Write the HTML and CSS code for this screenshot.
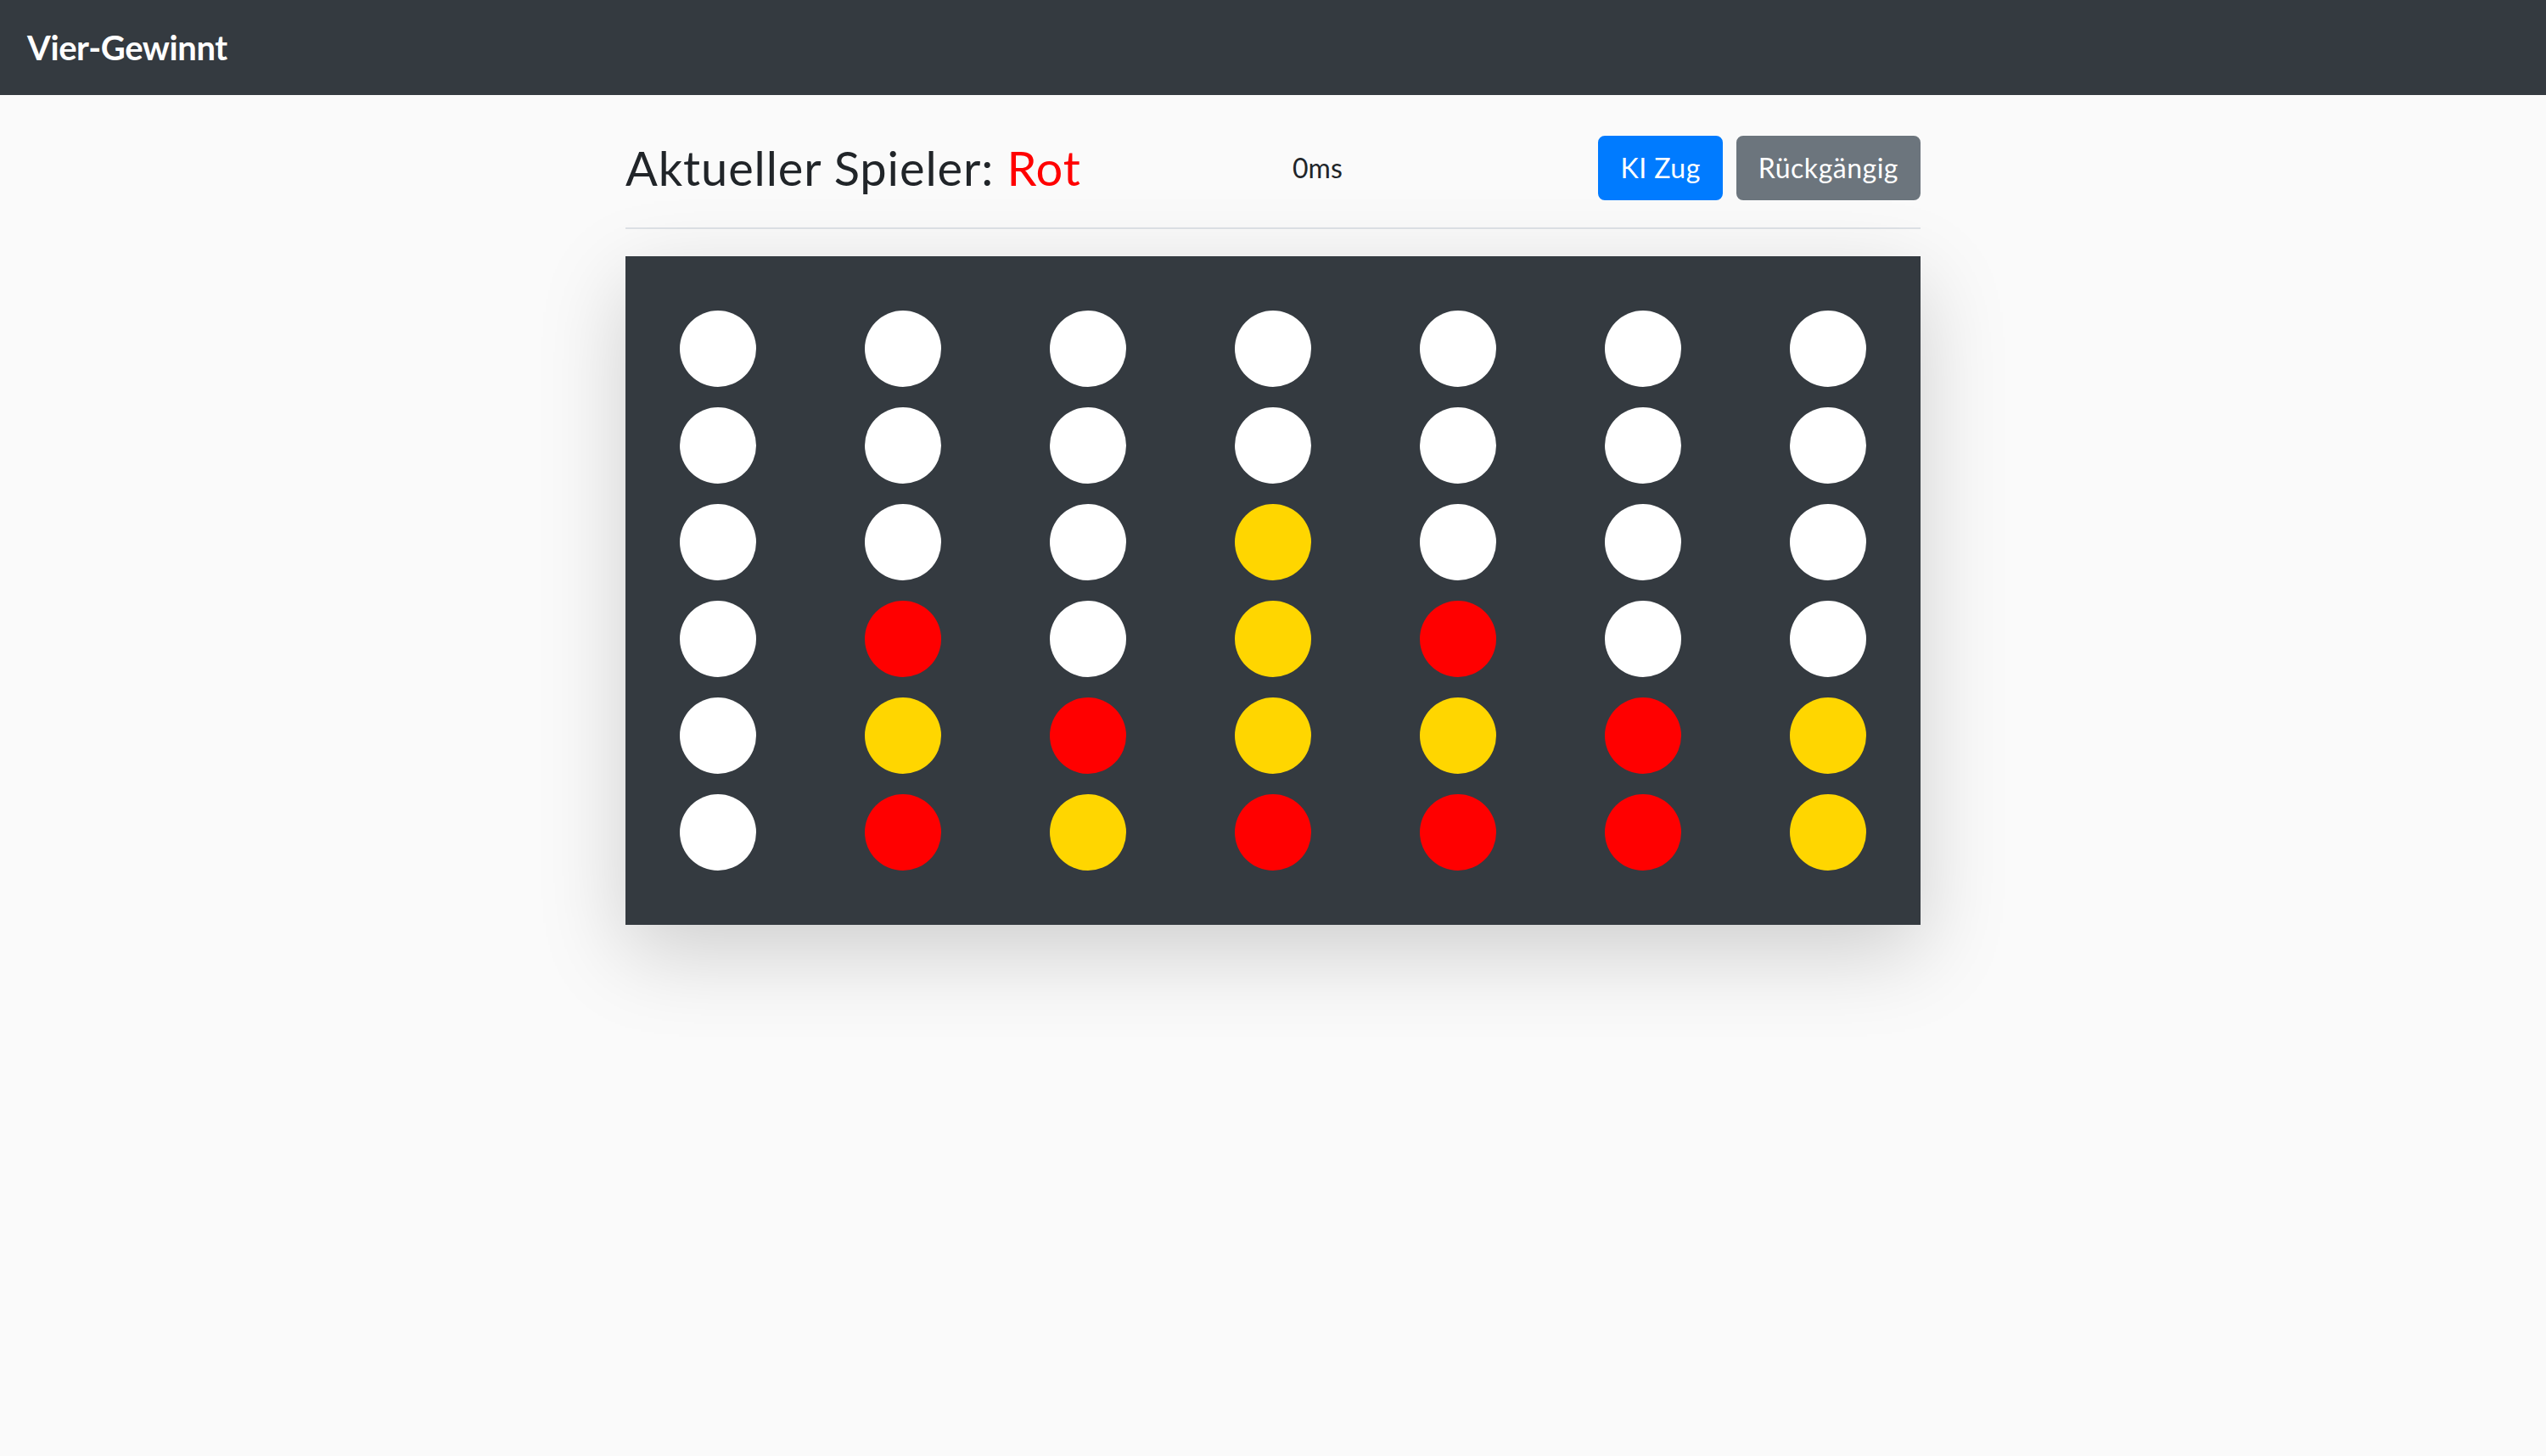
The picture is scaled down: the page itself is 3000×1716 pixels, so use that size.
FILE: index.html
```html
<!DOCTYPE html>
<html lang="de">
<head>
<meta charset="utf-8">
<title>Vier-Gewinnt</title>
<link rel="stylesheet" href="styles.css">
</head>
<body>
<nav class="navbar">
  <a class="brand" href="#">Vier-Gewinnt</a>
</nav>
<main class="container">
  <div class="toolbar">
    <h3 class="player">Aktueller Spieler: <span class="red-text">Rot</span></h3>
    <span class="timer">0ms</span>
    <div class="actions">
      <button class="btn btn-primary">KI Zug</button>
      <button class="btn btn-secondary">Rückgängig</button>
    </div>
  </div>
  <div class="board">
    <div class="cell"><span class="disc"></span></div>
    <div class="cell"><span class="disc"></span></div>
    <div class="cell"><span class="disc"></span></div>
    <div class="cell"><span class="disc"></span></div>
    <div class="cell"><span class="disc"></span></div>
    <div class="cell"><span class="disc"></span></div>
    <div class="cell"><span class="disc"></span></div>

    <div class="cell"><span class="disc"></span></div>
    <div class="cell"><span class="disc"></span></div>
    <div class="cell"><span class="disc"></span></div>
    <div class="cell"><span class="disc"></span></div>
    <div class="cell"><span class="disc"></span></div>
    <div class="cell"><span class="disc"></span></div>
    <div class="cell"><span class="disc"></span></div>

    <div class="cell"><span class="disc"></span></div>
    <div class="cell"><span class="disc"></span></div>
    <div class="cell"><span class="disc"></span></div>
    <div class="cell"><span class="disc yellow"></span></div>
    <div class="cell"><span class="disc"></span></div>
    <div class="cell"><span class="disc"></span></div>
    <div class="cell"><span class="disc"></span></div>

    <div class="cell"><span class="disc"></span></div>
    <div class="cell"><span class="disc red"></span></div>
    <div class="cell"><span class="disc"></span></div>
    <div class="cell"><span class="disc yellow"></span></div>
    <div class="cell"><span class="disc red"></span></div>
    <div class="cell"><span class="disc"></span></div>
    <div class="cell"><span class="disc"></span></div>

    <div class="cell"><span class="disc"></span></div>
    <div class="cell"><span class="disc yellow"></span></div>
    <div class="cell"><span class="disc red"></span></div>
    <div class="cell"><span class="disc yellow"></span></div>
    <div class="cell"><span class="disc yellow"></span></div>
    <div class="cell"><span class="disc red"></span></div>
    <div class="cell"><span class="disc yellow"></span></div>

    <div class="cell"><span class="disc"></span></div>
    <div class="cell"><span class="disc red"></span></div>
    <div class="cell"><span class="disc yellow"></span></div>
    <div class="cell"><span class="disc red"></span></div>
    <div class="cell"><span class="disc red"></span></div>
    <div class="cell"><span class="disc red"></span></div>
    <div class="cell"><span class="disc yellow"></span></div>
  </div>
</main>
</body>
</html>
```
FILE: styles.css
```css
* {
  box-sizing: border-box;
}

html, body {
  margin: 0;
  padding: 0;
}

body {
  background: #fafafa;
  color: #212529;
  font-family: "Lato", "Noto Sans", "Open Sans", sans-serif;
  font-size: 32px;
  line-height: 1.5;
  min-height: 1716px;
}

.navbar {
  background: #343a40;
  height: 112px;
  padding: 16px 32px;
  display: flex;
  align-items: center;
}

.brand {
  color: #fff;
  text-decoration: none;
  font-size: 40px;
  line-height: 60px;
  padding: 10px 0;
  font-weight: 700;
  letter-spacing: -0.4px;
}

.container {
  width: 1526px;
  margin: 48px auto 0;
}

.toolbar {
  display: grid;
  grid-template-columns: 786px auto 1fr;
  align-items: center;
  padding-bottom: 32px;
  border-bottom: 2px solid #dee2e6;
}

.player {
  margin: 0;
  font-size: 56px;
  font-weight: 400;
  line-height: 1.2;
  letter-spacing: 0.9px;
}

.red-text {
  color: #ff0000;
}

.timer {
  font-size: 32px;
  line-height: 1.5;
}

.actions {
  display: flex;
  gap: 16px;
  justify-self: end;
}

.btn {
  font-family: inherit;
  font-size: 32px;
  line-height: 1.5;
  letter-spacing: 0.5px;
  padding: 12px 24px;
  border: 2px solid transparent;
  border-radius: 8px;
  color: #fff;
  cursor: pointer;
}

.btn-primary {
  background: #007bff;
  border-color: #007bff;
}

.btn-secondary {
  background: #6c757d;
  border-color: #6c757d;
}

.board {
  margin-top: 32px;
  background: #343a40;
  padding: 52px 0;
  display: grid;
  grid-template-columns: repeat(7, 1fr);
  grid-auto-rows: 114px;
  box-shadow: 0 32px 96px rgba(0, 0, 0, 0.175);
}

.cell {
  display: flex;
  align-items: center;
  justify-content: center;
}

.disc {
  width: 90px;
  height: 90px;
  border-radius: 50%;
  background: #ffffff;
}

.disc.red {
  background: #ff0000;
}

.disc.yellow {
  background: #ffd600;
}
```
